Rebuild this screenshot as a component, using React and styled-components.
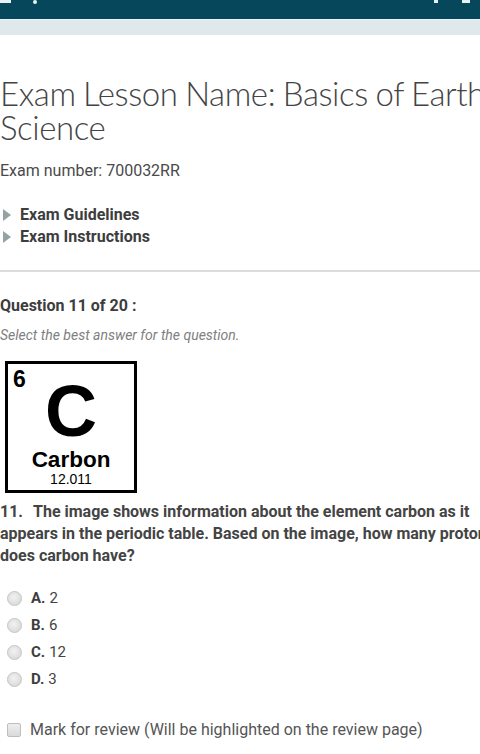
import React from 'react'
import styled, { createGlobalStyle } from 'styled-components'

const GlobalStyle = createGlobalStyle`
  html, body {
    margin: 0;
    padding: 0;
    background: #fff;
    overflow: hidden;
  }
  body {
    font-family: Roboto, "Liberation Sans", sans-serif;
    color: #444;
  }
`

const Page = styled.div`
  width: 520px;
`

const TopBar = styled.div`
  height: 19px;
  background: #07475b;
  display: flex;
  align-items: flex-start;
  justify-content: space-between;
  padding: 0 8px 0 0;
  width: 480px;
  box-sizing: border-box;
`

const TopLeft = styled.div`
  display: flex;
  gap: 22px;
  align-items: flex-start;
`

const TopMark = styled.span`
  display: block;
  width: ${p => p.w}px;
  height: ${p => p.h}px;
  background: #e8f2f4;
  border-radius: ${p => (p.round ? '50%' : '0')};
`

const TopRight = styled.div`
  display: flex;
  gap: 24px;
  padding-right: 2px;
`

const SubBar = styled.div`
  height: 15px;
  width: 480px;
  background: #dfe8ea;
  border-top: 1px solid #e9f3f5;
`

const Content = styled.div`
  padding: 41px 0 0 0;
`

const Title = styled.h1`
  margin: 0;
  width: 500px;
  font-family: Lato, "Open Sans", sans-serif;
  font-weight: 300;
  font-size: 33px;
  line-height: 34px;
  color: #444;
  letter-spacing: -0.4px;
  word-spacing: -1px;
`

const ExamNumber = styled.p`
  margin: 17px 0 0 0;
  font-size: 16px;
  color: #4a4a4a;
`

const Links = styled.ul`
  list-style: none;
  margin: 24px 0 0 0;
  padding: 0;
`

const LinkItem = styled.li`
  display: flex;
  align-items: center;
  gap: 9px;
  font-size: 16px;
  font-weight: 700;
  line-height: 22px;
  color: #3d3d3d;
`

const Caret = styled.span`
  width: 0;
  height: 0;
  margin-left: 3px;
  border-top: 6px solid transparent;
  border-bottom: 6px solid transparent;
  border-left: 8px solid #93a3a4;
`

const Divider = styled.hr`
  width: 480px;
  margin: 22px 0 0 0;
  border: 0;
  border-top: 2px solid #dcdcdc;
`

const QuestionHead = styled.h2`
  margin: 24px 0 0 0;
  font-size: 16px;
  font-weight: 700;
  color: #3d3d3d;
`

const Hint = styled.p`
  margin: 12px 0 0 0;
  font-size: 14px;
  font-style: italic;
  color: #808080;
`

const ElementBox = styled.div`
  margin: 18px 0 0 5px;
  width: 126px;
  height: 126px;
  border: 3px solid #000;
  display: flex;
  flex-direction: column;
  align-items: center;
  font-family: "Liberation Sans", Arial, sans-serif;
  color: #000;
  position: relative;
`

const AtomicNumber = styled.span`
  position: absolute;
  left: 5px;
  top: 2px;
  font-size: 23px;
  font-weight: 700;
`

const Symbol = styled.span`
  margin-top: 13px;
  font-size: 72px;
  font-weight: 700;
  line-height: 68px;
`

const ElementName = styled.span`
  margin-top: 3px;
  font-size: 22.5px;
  font-weight: 700;
  line-height: 23px;
`

const Mass = styled.span`
  font-size: 14px;
  line-height: 16px;
`

const QuestionText = styled.p`
  margin: 8px 0 0 0;
  width: 510px;
  font-size: 16px;
  font-weight: 700;
  line-height: 22px;
  color: #444;
`

const Num = styled.span`
  margin-right: 10px;
`

const Options = styled.div`
  margin-top: 22px;
  display: flex;
  flex-direction: column;
  gap: 9px;
`

const Option = styled.label`
  display: flex;
  align-items: center;
  gap: 9px;
  padding-left: 7px;
  font-size: 15px;
  line-height: 18px;
  color: #444;
`

const Radio = styled.span`
  width: 13px;
  height: 13px;
  border-radius: 50%;
  border: 1px solid #c4c4c4;
  background: radial-gradient(circle at 45% 40%, #f2f2f2 0%, #dcdcdc 70%, #cfcfcf 100%);
`

const Letter = styled.b`
  margin-right: 4px;
  color: #3d3d3d;
`

const Review = styled.label`
  margin-top: 32px;
  display: flex;
  align-items: center;
  gap: 9px;
  padding-left: 7px;
  font-size: 16px;
  color: #555;
`

const Check = styled.span`
  width: 12px;
  height: 12px;
  border: 1px solid #bdbdbd;
  border-radius: 2px;
  background: linear-gradient(#eee, #dadada);
`

const options = [
  ['A.', '2'],
  ['B.', '6'],
  ['C.', '12'],
  ['D.', '3'],
]

export default function App() {
  return (
    <>
      <GlobalStyle />
      <Page>
        <TopBar>
          <TopLeft>
            <TopMark w={11} h={3} />
            <TopMark w={4} h={4} round />
          </TopLeft>
          <TopRight>
            <TopMark w={4} h={3} />
            <TopMark w={8} h={3} />
          </TopRight>
        </TopBar>
        <SubBar />
        <Content>
          <Title>Exam Lesson Name: Basics of Earth Science</Title>
          <ExamNumber>Exam number: 700032RR</ExamNumber>
          <Links>
            <LinkItem><Caret />Exam Guidelines</LinkItem>
            <LinkItem><Caret />Exam Instructions</LinkItem>
          </Links>
          <Divider />
          <QuestionHead>Question 11 of 20 :</QuestionHead>
          <Hint>Select the best answer for the question.</Hint>
          <ElementBox>
            <AtomicNumber>6</AtomicNumber>
            <Symbol>C</Symbol>
            <ElementName>Carbon</ElementName>
            <Mass>12.011</Mass>
          </ElementBox>
          <QuestionText>
            <Num>11.</Num>The image shows information about the element carbon as it appears in the periodic table. Based on the image, how many protons does carbon have?
          </QuestionText>
          <Options>
            {options.map(([l, v]) => (
              <Option key={l}>
                <Radio />
                <span><Letter>{l}</Letter>{v}</span>
              </Option>
            ))}
          </Options>
          <Review>
            <Check />
            Mark for review (Will be highlighted on the review page)
          </Review>
        </Content>
      </Page>
    </>
  )
}
